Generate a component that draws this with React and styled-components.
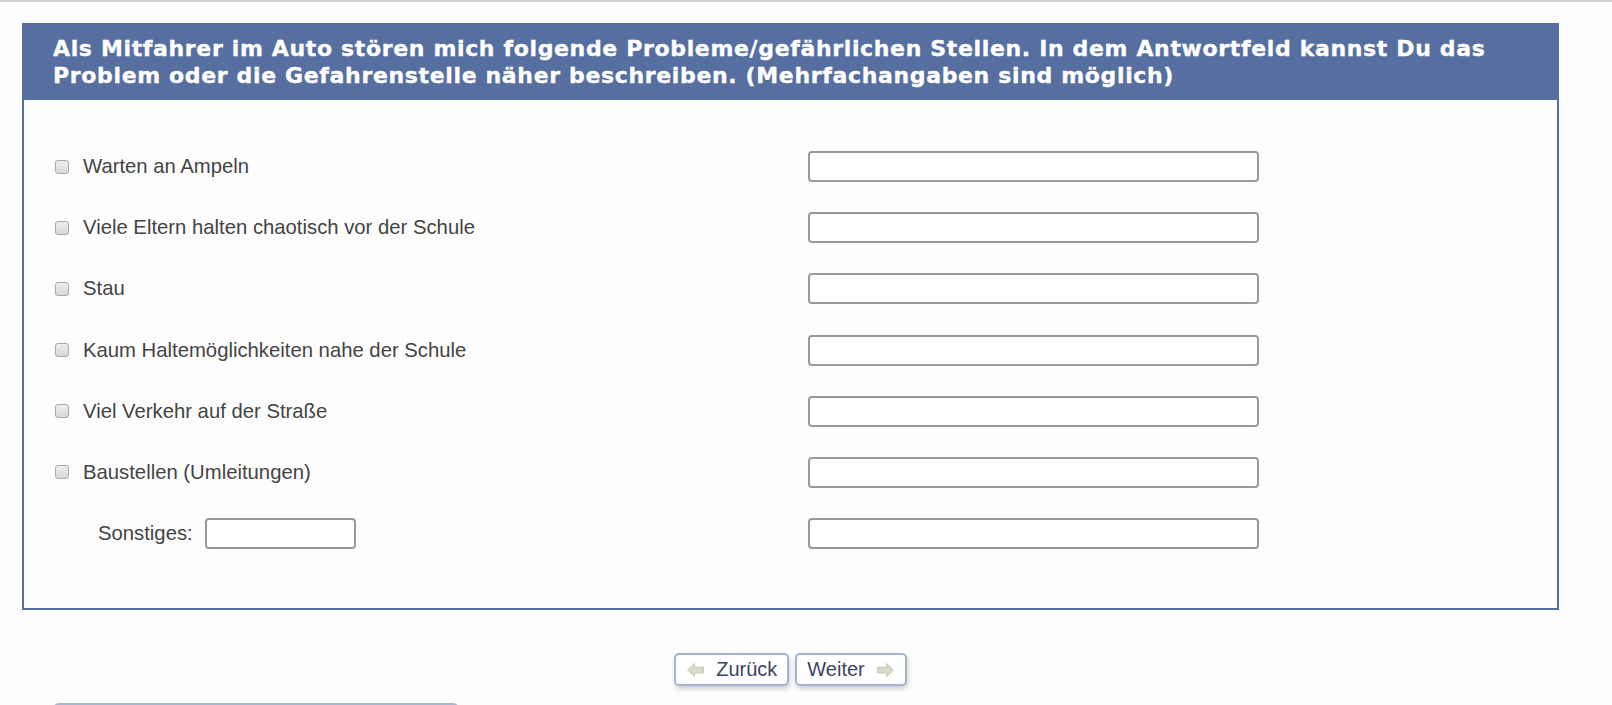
import React from 'react'
import styled, { createGlobalStyle } from 'styled-components'

const Global = createGlobalStyle`
  html, body {
    margin: 0;
    padding: 0;
    background: #fdfdfd;
    font-family: "Liberation Sans", Arial, sans-serif;
  }
`

const TopLine = styled.div`
  height: 2px;
  background: #d0d0d0;
`

const Page = styled.div`
  padding: 21px 0 0 22px;
`

const Panel = styled.div`
  width: 1537px;
  box-sizing: border-box;
  border: 2px solid #566fa0;
  border-top: none;
  background: #fdfdfd;
`

const Question = styled.h2`
  margin: 0 -2px;
  background: #566fa0;
  color: #fff;
  font-family: "DejaVu Sans", Verdana, sans-serif;
  font-size: 22px;
  font-weight: 700;
  line-height: 27px;
  letter-spacing: 0.65px;
  -webkit-text-stroke: 0.35px #fff;
  padding: 12px 30px 11px 31px;
`

const Body = styled.div`
  display: grid;
  grid-template-columns: 754px 451px;
  row-gap: 30.2px;
  padding: 51px 30px 59px;
  align-items: center;
`

const Option = styled.label`
  display: flex;
  align-items: center;
  font-size: 20.3px;
  color: #444;
  height: 31px;
  padding-left: ${p => (p.indent ? '44px' : '1px')};
`

const Box = styled.span`
  width: 12px;
  height: 12px;
  border: 1px solid #a9a9a9;
  border-radius: 3px;
  background: linear-gradient(#eeeeee, #d8d8d8);
  margin-right: 14px;
  flex: none;
`

const TextField = styled.input`
  box-sizing: border-box;
  width: ${p => p.w || '451px'};
  height: 31px;
  border: 2px solid #999;
  border-radius: 4px;
  background: #fff;
  margin-left: ${p => p.ml || '0'};
  font-size: 16px;
`

const Nav = styled.div`
  display: flex;
  justify-content: center;
  gap: 6px;
  margin-top: 43px;
  width: 1537px;
`

const NavButton = styled.button`
  display: flex;
  align-items: center;
  gap: 11px;
  height: 33px;
  box-sizing: border-box;
  padding: 0 10px;
  border: 2px solid #a5b3cf;
  border-radius: 5px;
  background: #fff;
  box-shadow: 1px 3px 5px rgba(0, 0, 0, 0.18);
  color: #3d4563;
  font-family: "Liberation Sans", Arial, sans-serif;
  font-size: 20px;
`

const Footer = styled.div`
  margin: 17px 0 0 31px;
  width: 402px;
  height: 30px;
  border: 2px solid #a9b6d0;
  border-radius: 6px;
  background: #fff;
`

const Arrow = ({ dir }) => (
  <svg width="19" height="16" viewBox="0 0 18 16" style={{ transform: dir === 'right' ? 'scaleX(-1)' : 'none' }}>
    <path d="M1 8 L8 1.5 L8 5 L17 5 L17 11 L8 11 L8 14.5 Z" fill="#d6dac8" stroke="#c8ccba" strokeWidth="1" />
  </svg>
)

const options = [
  'Warten an Ampeln',
  'Viele Eltern halten chaotisch vor der Schule',
  'Stau',
  'Kaum Haltemöglichkeiten nahe der Schule',
  'Viel Verkehr auf der Straße',
  'Baustellen (Umleitungen)',
]

const App = () => (
  <>
    <Global />
    <TopLine />
    <Page>
      <Panel>
        <Question>
          Als Mitfahrer im Auto stören mich folgende Probleme/gefährlichen Stellen. In dem Antwortfeld kannst Du das
          Problem oder die Gefahrenstelle näher beschreiben. (Mehrfachangaben sind möglich)
        </Question>
        <Body>
          {options.map(o => (
            <React.Fragment key={o}>
              <Option>
                <Box />
                {o}
              </Option>
              <TextField />
            </React.Fragment>
          ))}
          <Option indent>
            Sonstiges:
            <TextField w="151px" ml="12px" />
          </Option>
          <TextField />
        </Body>
      </Panel>
      <Nav>
        <NavButton>
          <Arrow />
          Zurück
        </NavButton>
        <NavButton>
          Weiter
          <Arrow dir="right" />
        </NavButton>
      </Nav>
      <Footer />
    </Page>
  </>
)

export default App
